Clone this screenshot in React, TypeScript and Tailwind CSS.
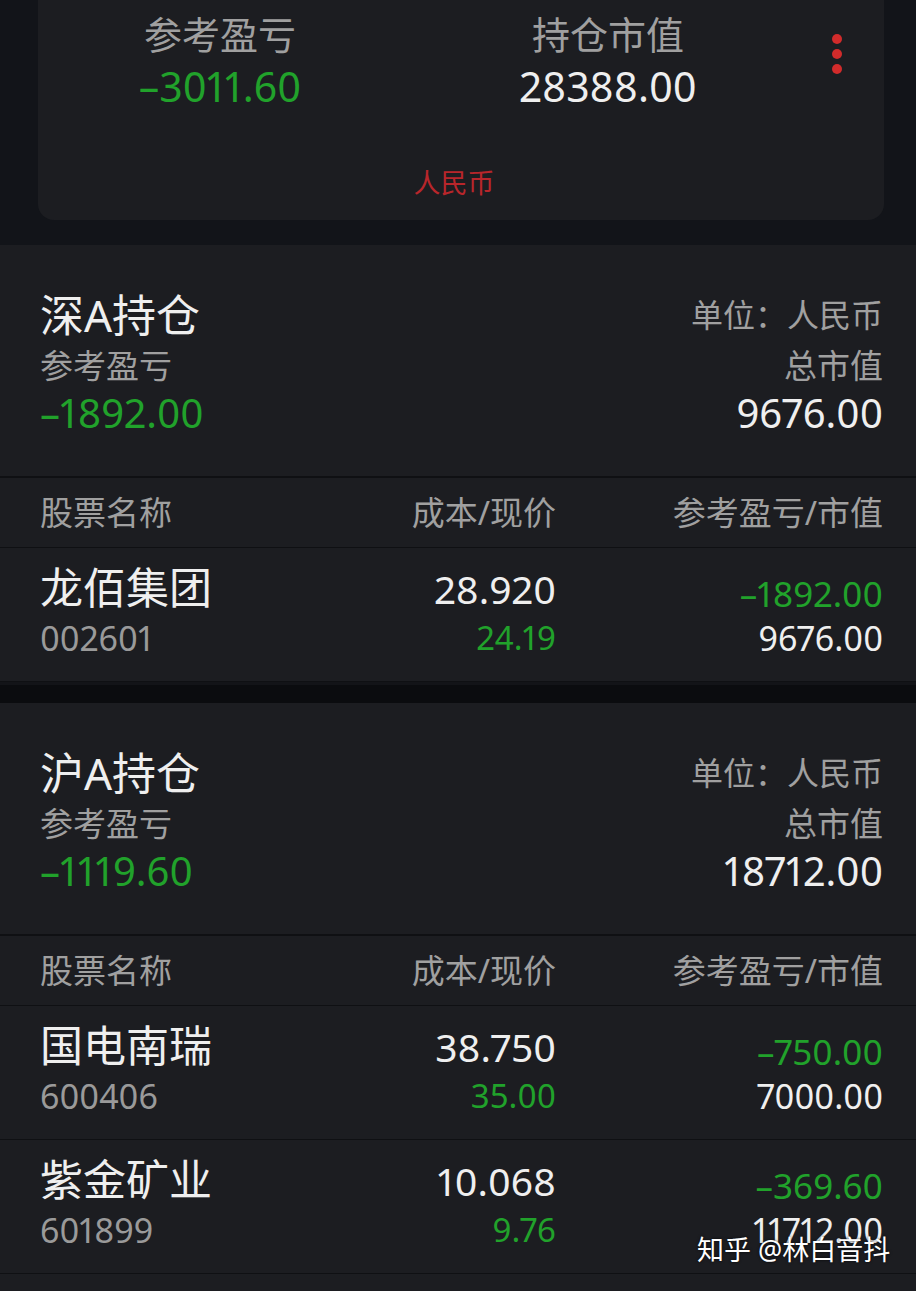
import React from 'react';

type Holding = {
  name: string;
  code: string;
  cost: string;
  price: string;
  pnl: string;
  value: string;
};

type Section = {
  title: string;
  pnl: string;
  total: string;
  rows: Holding[];
};

const sections: Section[] = [
  {
    title: '深A持仓',
    pnl: '–1892.00',
    total: '9676.00',
    rows: [
      { name: '龙佰集团', code: '002601', cost: '28.920', price: '24.19', pnl: '–1892.00', value: '9676.00' },
    ],
  },
  {
    title: '沪A持仓',
    pnl: '–1119.60',
    total: '18712.00',
    rows: [
      { name: '国电南瑞', code: '600406', cost: '38.750', price: '35.00', pnl: '–750.00', value: '7000.00' },
      { name: '紫金矿业', code: '601899', cost: '10.068', price: '9.76', pnl: '–369.60', value: '11712.00' },
    ],
  },
];

// Summary card at the top, its upper edge scrolled out of view
function SummaryCard() {
  return (
    <div className="bg-[#121419] pl-[38px] pr-[32px] pb-[25px]">
      <div className="h-[220px] rounded-b-[16px] bg-[#1c1d21] flex flex-col">
        <div className="flex pt-[12px]">
          <div className="w-[364px] flex flex-col items-center">
            <span className="text-[38px] leading-[44px] text-[#a0a0a0]">参考盈亏</span>
            <span className="mt-[6px] text-[41px] leading-[48px] text-[#21a22b]">–3011.60</span>
          </div>
          <div className="w-[412px] flex flex-col items-center">
            <span className="text-[38px] leading-[44px] text-[#a0a0a0]">持仓市值</span>
            <span className="mt-[6px] text-[41px] leading-[48px] text-[#efefef]">28388.00</span>
          </div>
          <div className="ml-[18px] pt-[22px] flex flex-col gap-[5px]">
            <span className="block w-[10px] h-[10px] rounded-full bg-[#d22b2b]" />
            <span className="block w-[10px] h-[10px] rounded-full bg-[#d22b2b]" />
            <span className="block w-[10px] h-[10px] rounded-full bg-[#d22b2b]" />
          </div>
        </div>
        <div className="mt-[57px] pr-[14px] text-center text-[27px] leading-[32px] text-[#b8262b]">人民币</div>
      </div>
    </div>
  );
}

function HoldingRow({ row }: { row: Holding }) {
  return (
    <div className="h-[134px] border-b-[1px] border-[#0f1013] pl-[40px] pr-[33px] pt-[15px]">
      <div className="flex h-[50px]">
        <div className="flex-1 text-[43px] leading-[50px] text-[#efefef]">{row.name}</div>
        <div className="w-[200px] text-right text-[39px] leading-[46px] mt-[3px] text-[#efefef]">{row.cost}</div>
        <div className="w-[327px] text-right text-[35px] leading-[42px] mt-[10px] text-[#21a22b]">{row.pnl}</div>
      </div>
      <div className="flex h-[40px] mt-[5px] text-[33px] leading-[40px]">
        <div className="flex-1 text-[#9a9a9a] text-[34px]">{row.code}</div>
        <div className="w-[200px] text-right text-[#21a22b]">{row.price}</div>
        <div className="w-[327px] text-right text-[#efefef] text-[34px]">{row.value}</div>
      </div>
    </div>
  );
}

function HoldingSection({ section }: { section: Section }) {
  return (
    <div className="bg-[#1c1d21]">
      {/* section summary */}
      <div className="h-[233px] pl-[40px] pr-[33px] pt-[45px] border-b-[2px] border-[#0f1013]">
        <div className="flex justify-between items-center h-[50px]">
          <span className="text-[44px] leading-[50px] text-[#efefef]">{section.title}</span>
          <span className="text-[32px] leading-[40px] text-[#a0a0a0]">单位：人民币</span>
        </div>
        <div className="flex justify-between items-center h-[40px] mt-[6px] text-[33px] leading-[40px] text-[#a0a0a0]">
          <span>参考盈亏</span>
          <span>总市值</span>
        </div>
        <div className="flex justify-between items-center h-[46px] mt-[4px] text-[40px] leading-[46px]">
          <span className="text-[#21a22b]">{section.pnl}</span>
          <span className="text-[#efefef]">{section.total}</span>
        </div>
      </div>

      {/* column headers */}
      <div className="h-[70px] flex items-center pl-[40px] pr-[33px] border-b-[1px] border-[#0f1013] text-[33px] leading-[40px] text-[#a0a0a0]">
        <div className="flex-1">股票名称</div>
        <div className="w-[200px] text-right">成本/现价</div>
        <div className="w-[327px] text-right">参考盈亏/市值</div>
      </div>

      {section.rows.map((row) => (
        <HoldingRow key={row.code} row={row} />
      ))}
    </div>
  );
}

export default function App() {
  return (
    <div
      className="relative w-[916px] h-[1291px] overflow-hidden bg-[#1c1d21] proportional-nums"
      style={{ fontFamily: '"Noto Sans", "Noto Sans CJK SC", sans-serif' }}
    >
      <SummaryCard />
      <HoldingSection section={sections[0]} />
      <div className="h-[21px] bg-[#0b0c0f] border-t-[3px] border-[#131418]" />
      <HoldingSection section={sections[1]} />

      {/* watermark */}
      <div className="absolute left-[697px] top-[1232px] text-[27px] leading-[36px] text-white whitespace-nowrap [text-shadow:0_0_3px_rgba(0,0,0,0.8)]">
        知乎 @林白音抖
      </div>
    </div>
  );
}
